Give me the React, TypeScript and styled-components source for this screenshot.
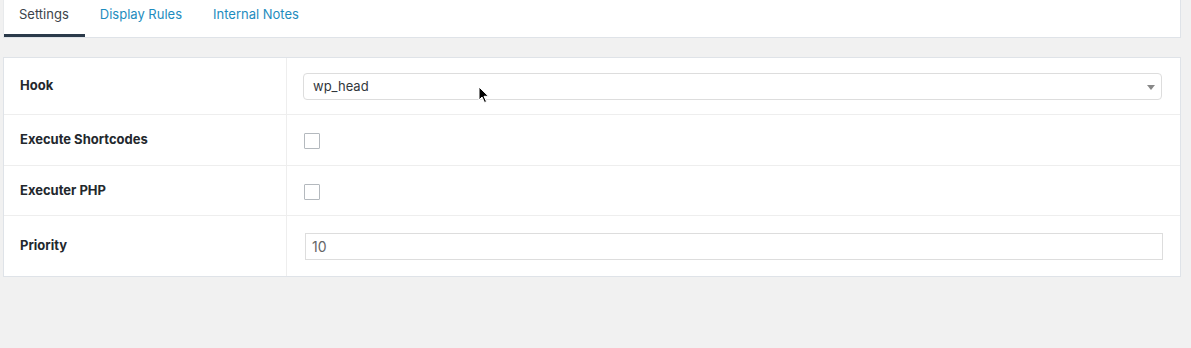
import React, { FC } from 'react';
import styled, { createGlobalStyle } from 'styled-components';

const GlobalStyle = createGlobalStyle`
  html, body {
    margin: 0;
    padding: 0;
    background: #f1f1f1;
    font-family: Inter, "Liberation Sans", Arial, sans-serif;
    -webkit-font-smoothing: antialiased;
  }
`;

const Page = styled.div`
  position: relative;
  width: 1191px;
  height: 348px;
  padding: 0 10px 0 3px;
  box-sizing: border-box;
  display: flex;
  flex-direction: column;
  gap: 19px;
`;

const TabBar = styled.div`
  display: flex;
  background: #fff;
  border: 1px solid #dfe3e8;
  border-top: none;
  border-left-color: #e8eaec;
  height: 38px;
  box-sizing: border-box;
`;

const Tab = styled.div<{ $active?: boolean }>`
  padding: 5px 16px 0 15px;
  height: 37px;
  box-sizing: border-box;
  font-size: 13px;
  line-height: 18px;
  color: ${(p) => (p.$active ? '#3c434a' : '#1e8cbe')};
  border-bottom: 3px solid ${(p) => (p.$active ? '#2b3a4a' : 'transparent')};
`;

const Panel = styled.div`
  background: #fff;
  border: 1px solid #dfe3e8;
  display: flex;
  flex-direction: column;
`;

const Row = styled.div<{ $height: number }>`
  display: grid;
  grid-template-columns: 283px 1fr;
  height: ${(p) => p.$height}px;
  border-top: 1px solid #eeeeee;
  &:first-child {
    border-top: none;
  }
`;

const Label = styled.div`
  display: flex;
  align-items: center;
  padding: 0 0 2px 16px;
  font-size: 13px;
  font-weight: 700;
  color: #23282d;
  border-right: 1px solid #eeeeee;
`;

const Field = styled.div`
  display: flex;
  align-items: center;
  padding: 0 18px 0 16px;
`;

const Select = styled.div`
  position: relative;
  flex: 1;
  height: 27px;
  box-sizing: border-box;
  border: 1px solid #dddddd;
  border-radius: 4px;
  display: flex;
  align-items: center;
  padding: 0 9px;
  font-size: 13px;
  color: #32373c;
`;

const Caret = styled.span`
  position: absolute;
  right: 6px;
  top: 11px;
  width: 0;
  height: 0;
  border-left: 4px solid transparent;
  border-right: 4px solid transparent;
  border-top: 5px solid #888;
`;

const Checkbox = styled.span`
  width: 16px;
  height: 16px;
  box-sizing: border-box;
  border: 1px solid #b4b9be;
  border-radius: 1px;
  margin-left: 1px;
  margin-top: 2px;
`;

const TextInput = styled.div`
  flex: 1;
  height: 27px;
  margin-left: 2px;
  margin-right: -1px;
  box-sizing: border-box;
  border: 1px solid #dddddd;
  display: flex;
  align-items: center;
  padding: 0 6px;
  font-size: 14px;
  color: #666;
`;

const Pointer = styled.svg`
  position: absolute;
  left: 478px;
  top: 86px;
`;

const App: FC = () => (
  <>
    <GlobalStyle />
    <Page>
      <TabBar>
        <Tab $active>Settings</Tab>
        <Tab>Display Rules</Tab>
        <Tab>Internal Notes</Tab>
      </TabBar>
      <Panel>
        <Row $height={56}>
          <Label>Hook</Label>
          <Field>
            <Select>
              wp_head
              <Caret />
            </Select>
          </Field>
        </Row>
        <Row $height={50}>
          <Label>Execute Shortcodes</Label>
          <Field>
            <Checkbox />
          </Field>
        </Row>
        <Row $height={49}>
          <Label>Executer PHP</Label>
          <Field>
            <Checkbox />
          </Field>
        </Row>
        <Row $height={60}>
          <Label>Priority</Label>
          <Field>
            <TextInput>10</TextInput>
          </Field>
        </Row>
      </Panel>
      <Pointer width="12" height="18" viewBox="0 0 12 18">
        <path d="M1 1 L1 14 L4 11 L6.5 16.5 L8.5 15.6 L6 10.3 L10.5 10.3 Z" fill="#000" stroke="#fff" strokeWidth="1" />
      </Pointer>
    </Page>
  </>
);

export default App;
